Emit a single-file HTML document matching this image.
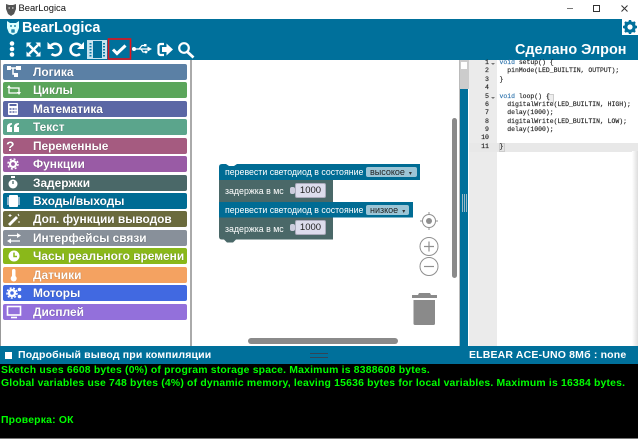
<!DOCTYPE html>
<html><head><meta charset="utf-8"><style>
html,body{margin:0;padding:0}
body{width:638px;height:439px;position:relative;overflow:hidden;background:#fff;font-family:"Liberation Sans",sans-serif}
.a{position:absolute}
.c{position:absolute;left:3px;width:184px;height:16px;border-radius:2px;color:#fff;font-weight:bold;font-size:11.9px;line-height:16px;text-shadow:0 0 1px rgba(0,0,0,.4)}
.c span{position:absolute;left:30px;top:0;white-space:nowrap}
.c svg{position:absolute;left:3px;top:1px}
.b{position:absolute;font-size:8.8px;color:#fff;white-space:nowrap;line-height:12px}
.f{position:absolute;background:#9cc5d6;border-radius:2px;color:#222;font-size:9px;line-height:10px;height:10px;padding-left:4px;box-sizing:border-box;white-space:nowrap}
.n{position:absolute;background:#dcdcec;border:1px solid #aab;height:15px;width:31px;box-sizing:border-box;color:#222;font-size:9.5px;line-height:13px;text-align:center;border-radius:2px}
pre{margin:0;position:absolute;font-family:"Liberation Mono",monospace;font-size:6.45px;line-height:8.37px;color:#222;-webkit-text-stroke:.15px #222}
.o{position:absolute;left:1px;font-size:10.4px;font-weight:bold;color:#0f0;white-space:nowrap;letter-spacing:.195px}
</style></head><body>
<div class="a" style="left:0;top:0;width:638px;height:19px;background:#fff"></div>
<svg class="a" style="left:5px;top:3px" width="12" height="13" viewBox="0 0 12 13"><path d="M1 1l3 1h4l3-1v5l-2 5-3 2-3-2-2-5z" fill="#555"/><path d="M3.500 5h1.500M7 5h1.500" stroke="#fff"/></svg>
<div class="a" style="left:18.500px;top:2px;font-size:9.400px;line-height:12px;color:#111">BearLogica</div>
<div class="a" style="left:567px;top:8px;width:6px;height:1px;background:#777"></div>
<div class="a" style="left:593px;top:5px;width:5px;height:5px;border:1px solid #333"></div>
<svg class="a" style="left:621px;top:5px" width="7" height="7"><path d="M.5 .5l6 6M6.500 .5l-6 6" stroke="#333" stroke-width="1"/></svg>

<div class="a" style="left:0;top:19px;width:638px;height:41px;background:#00709b"></div>
<svg class="a" style="left:6px;top:20px" width="14" height="16" viewBox="0 0 14 16"><path d="M1 1l3 2h6l3-2 0 7-2 5-4 2-4-2-2-5z" fill="#dff"/><path d="M4 6h2M8 6h2M6 10h2v2h-2z" fill="none" stroke="#00709b" stroke-width="1.300"/></svg>
<div class="a" style="left:22px;top:19px;font-size:14.400px;line-height:18px;font-weight:bold;color:#fff">BearLogica</div>
<div class="a" style="left:515px;top:41px;font-size:14.400px;line-height:18px;font-weight:bold;color:#fff">Сделано Элрон</div>

<svg class="a" style="left:0;top:38px" width="200" height="22" viewBox="0 0 200 22" fill="none">
<g fill="#fff"><circle cx="12" cy="5.500" r="2.300"/><circle cx="12" cy="11" r="2.300"/><circle cx="12" cy="16.500" r="2.300"/></g>
<path d="M29 7l9 9M38 7l-9 9" stroke="#fff" stroke-width="2.300"/>
<path d="M26.500 4.500h5l-5 5zM40.500 4.500h-5l5 5zM26.500 18.500h5l-5-5zM40.500 18.500h-5l5-5z" fill="#fff"/>
<path d="M51 7.500a5.800 5.800 0 1 1 .5 8.500" stroke="#fff" stroke-width="2.500"/>
<path d="M47.500 4v7h7z" fill="#fff"/>
<path d="M80.500 7.500a5.800 5.800 0 1 0-.5 8.500" stroke="#fff" stroke-width="2.500"/>
<path d="M84 4v7h-7z" fill="#fff"/>
<rect x="87" y="2" width="20" height="19" fill="#c7e3ee"/>
<rect x="93" y="3" width="9" height="17" fill="#00709b"/>
<path d="M90.500 5v14M104 5v14" stroke="#0a7aa5" stroke-width="2" stroke-dasharray="1.500 1.500"/>
<rect x="108.500" y="1" width="22" height="20" stroke="#e2121b" stroke-width="1.600"/>
<path d="M113 11.500l4 4 8.500-8" stroke="#fff" stroke-width="3"/>
<path d="M134 11h16" stroke="#fff" stroke-width="1.300"/>
<circle cx="134" cy="11" r="2" fill="#fff"/><path d="M147.500 8.500l4.500 2.500-4.500 2.500z" fill="#fff"/>
<path d="M139 11l3-3.500h2.500M141 11l2 3h2" stroke="#fff" stroke-width="1.200"/><rect x="144" y="6" width="2.500" height="2.500" fill="#fff"/><circle cx="146" cy="14" r="1.400" fill="#fff"/>
<path d="M164 6h-3.500a2 2 0 0 0-2 2v7a2 2 0 0 0 2 2h3.500" stroke="#fff" stroke-width="2.200"/>
<path d="M162 9h4.500V5.500l6.500 6-6.500 6v-3.500h-4.500z" fill="#fff"/>
<circle cx="184" cy="10" r="4.800" stroke="#fff" stroke-width="2.200"/><path d="M187.500 14l6 5.500" stroke="#fff" stroke-width="2.800"/>
</svg>

<div class="a" style="left:622px;top:18px;width:16px;height:17px;background:#fff"></div>
<svg class="a" style="left:622px;top:19px" width="16" height="16" viewBox="0 0 16 16"><circle cx="8" cy="8" r="4.200" fill="none" stroke="#00709b" stroke-width="3.200"/><path d="M8 1v3M8 12v3M1 8h3M12 8h3M3 3l2 2M11 11l2 2M13 3l-2 2M5 11l-2 2" stroke="#00709b" stroke-width="2.400"/></svg>

<div class="a" style="left:0;top:60px;width:1px;height:286px;background:#999"></div>
<div class="a" style="left:190px;top:60px;width:2px;height:286px;background:#aaa"></div>

<div class="c" style="top:64px;background:#5b80a5"><svg width="16" height="14"><path d="M3 3h9M7 3v6h3" stroke="#fff" stroke-width="1.500" fill="none"/><rect x="1" y="1" width="4" height="4" fill="#fff"/><rect x="10" y="1" width="5" height="4" fill="#fff"/><rect x="8" y="8" width="4" height="4" fill="#fff"/></svg><span>Логика</span></div>
<div class="c" style="top:82px;background:#5ba55b"><svg width="16" height="14"><path d="M3 4v6h9M13 10V5H4" stroke="#fff" stroke-width="1.300" fill="none"/><path d="M1 5l2-3 2 3zM11 9l2 3 2-3z" fill="#fff"/></svg><span>Циклы</span></div>
<div class="c" style="top:101px;background:#5b67a5"><svg width="16" height="14"><rect x="2" y="1" width="10" height="12" rx="1" fill="#fff"/><path d="M3.500 3h7" stroke="#5b67a5" stroke-width="2"/><path d="M3.500 7h7M3.500 10h7" stroke="#5b67a5" stroke-width="1.500" stroke-dasharray="2 1"/></svg><span>Математика</span></div>
<div class="c" style="top:119px;background:#5ba58c"><span>Текст</span><svg width="16" height="14"><path d="M6 3v1.500Q4 5 4 7h2v5H1V7q0-4 5-4zM13 3v1.500Q11 5 11 7h2v5H8V7q0-4 5-4z" fill="#fff"/></svg></div>
<div class="c" style="top:138px;background:#a55b80"><span>Переменные</span><div class="a" style="left:3px;top:0;font-size:14px">?</div></div>
<div class="c" style="top:156px;background:#995ba5"><span>Функции</span><svg width="16" height="14"><circle cx="7" cy="7" r="3" fill="none" stroke="#fff" stroke-width="2.200"/><circle cx="7" cy="7" r="5" fill="none" stroke="#fff" stroke-width="1.500" stroke-dasharray="2 2"/></svg></div>
<div class="c" style="top:175px;background:#4a6868"><span>Задержки</span><svg width="16" height="14"><circle cx="7" cy="8" r="4.500" fill="#fff"/><rect x="5" y="0" width="4" height="2" fill="#fff"/><path d="M7 5v3" stroke="#4a6868" stroke-width="1.300"/></svg></div>
<div class="c" style="top:193px;background:#006c94"><span>Входы/выходы</span><svg width="16" height="14"><rect x="3" y="1" width="9" height="12" rx="1" fill="#fff"/><path d="M2 3v8M13 3v8" stroke="#bcd" stroke-width="1.500"/></svg></div>
<div class="c" style="top:211px;background:#6b6b3d"><span>Доп. функции выводов</span><svg width="16" height="14"><path d="M2 12l8-8 2 2-8 8z" fill="#fff"/><path d="M4 2v3M2.500 3.500h3M12 2l1 2M13 9v2" stroke="#fff"/></svg></div>
<div class="c" style="top:230px;background:#88909a"><span>Интерфейсы связи</span><svg width="16" height="14"><path d="M2 4.500h10M4 10h10" stroke="#fff" stroke-width="1.300"/><path d="M11 2l4 2.500-4 2.500zM5 7.500l-4 2.500 4 2.500z" fill="#fff"/></svg></div>
<div class="c" style="top:248px;background:#8ab81a"><span>Часы реального времени</span><svg width="16" height="14"><circle cx="8" cy="7" r="5.500" fill="#fff"/><path d="M8 3.500v4h3" stroke="#8ab81a" stroke-width="1.500" fill="none"/></svg></div>
<div class="c" style="top:267px;background:#f4a261"><span>Датчики</span><svg width="16" height="14"><rect x="6" y="1" width="3.500" height="9" rx="1.700" fill="#fff"/><circle cx="7.700" cy="10.500" r="3" fill="#fff"/></svg></div>
<div class="c" style="top:285px;background:#4169e1"><span>Моторы</span><svg width="18" height="14"><circle cx="6" cy="7" r="3" fill="none" stroke="#fff" stroke-width="2.500"/><circle cx="6" cy="7" r="5" fill="none" stroke="#fff" stroke-width="1.500" stroke-dasharray="2 1.500"/><circle cx="13.500" cy="3.500" r="1.800" fill="#fff"/><circle cx="13.500" cy="10.500" r="1.800" fill="#fff"/></svg></div>
<div class="c" style="top:304px;background:#9370db"><span>Дисплей</span><svg width="16" height="14"><rect x="1.500" y="1.500" width="13" height="8.500" fill="none" stroke="#fff" stroke-width="1.600"/><path d="M5 12.500h6" stroke="#fff" stroke-width="1.600"/></svg></div>

<!-- blocks -->
<svg class="a" style="left:0;top:0" width="638" height="439">
<path d="M219 180v-13q0-3 3-3h4l3 2h5l3-2h183v16z" fill="#006c94"/>
<path d="M219 180h114v22H219z" fill="#4a6868"/>
<path d="M219 202h194v15.500H219z" fill="#006c94"/>
<path d="M219 217.500h114v22h-97l-3 3h-6l-3-3h-2q-3 0-3-3z" fill="#4a6868"/>
</svg>
<div class="b" style="left:225px;top:166px">перевести светодиод в состояние</div>
<div class="f" style="left:366px;top:167px;width:51px">высокое<span style="font-size:6px;margin-left:4px;color:#333">▾</span></div>
<div class="b" style="left:225px;top:185px">задержка в мс</div>
<div class="a" style="left:290px;top:187px;width:5px;height:7px;background:#ccd;border-radius:2px"></div>
<div class="n" style="left:295px;top:183px">1000</div>
<div class="b" style="left:225px;top:204px">перевести светодиод в состояние</div>
<div class="f" style="left:366px;top:205px;width:43px">низкое<span style="font-size:6px;margin-left:4px;color:#333">▾</span></div>
<div class="b" style="left:225px;top:223px">задержка в мс</div>
<div class="a" style="left:290px;top:224px;width:5px;height:7px;background:#ccd;border-radius:2px"></div>
<div class="n" style="left:295px;top:220px">1000</div>

<!-- controls -->
<svg class="a" style="left:0;top:0" width="638" height="439" fill="none" stroke="#8f8f8f">
<circle cx="429" cy="221" r="6.500" stroke-width="1"/><circle cx="429" cy="221" r="3" fill="#8f8f8f" stroke="none"/><path d="M429 212v3M429 227v3M420 221h3M435 221h3" stroke-width="1"/>
<circle cx="429" cy="246.500" r="9" stroke-width="1"/><path d="M424 246.500h10M429 241.500v10" stroke-width="1.200"/>
<circle cx="429" cy="266.500" r="9" stroke-width="1"/><path d="M424 266.500h10" stroke-width="1.200"/>
<path d="M412 295h25v3h-25zM418 295l1-2h11l1 2z" fill="#8a8a8a" stroke="none"/>
<path d="M413.500 300h21.500v23.500q0 1.500-1.500 1.500h-18.500q-1.500 0-1.500-1.500z" fill="#8a8a8a" stroke="none"/>
</svg>
<div class="a" style="left:452px;top:118px;width:5px;height:160px;background:#8a8a8a;border-radius:3px"></div>
<div class="a" style="left:248px;top:338px;width:150px;height:6px;background:#8a8a8a;border-radius:3px"></div>

<!-- splitter / editor -->
<div class="a" style="left:459px;top:60px;width:1px;height:286px;background:#bbb"></div>
<div class="a" style="left:460px;top:60px;width:8px;height:286px;background:#00709b"></div>
<div class="a" style="left:460px;top:60px;width:9px;height:29px;background:#ccc"></div>
<div class="a" style="left:461px;top:62px;width:6px;height:7px;background:#fff"></div>
<div class="a" style="left:462px;top:194px;width:6px;height:18px;background:repeating-linear-gradient(90deg,#9bb8c6 0 1px,#00709b 1px 2px)"></div>
<div class="a" style="left:469px;top:60px;width:28px;height:286px;background:#ebebeb"></div>
<div class="a" style="left:469px;top:142.500px;width:169px;height:9px;background:#e8e8e8"></div>
<div class="a" style="left:632px;top:151px;width:6px;height:195px;background:linear-gradient(90deg,#fff,#ddd)"></div>
<pre style="left:469px;top:59px;width:20px;text-align:right;font-size:6.600px;color:#222">1
2
3
4
5
6
7
8
9
10
11</pre>
<div class="a" style="left:491px;top:63px;width:0;height:0;border:2px solid transparent;border-top:2.500px solid #777"></div>
<div class="a" style="left:491px;top:96.500px;width:0;height:0;border:2px solid transparent;border-top:2.500px solid #777"></div>
<div class="a" style="left:548px;top:93.500px;width:4px;height:7px;border:1px solid #ccc;background:#eee"></div>
<div class="a" style="left:499px;top:143px;width:4px;height:7px;border:1px solid #ccc;background:#e4e4e4"></div>
<pre style="left:499.500px;top:59px"><span style="color:#2f74ad;-webkit-text-stroke:.15px #2f74ad">void</span> setup() {
  pinMode(LED_BUILTIN, OUTPUT);
}

<span style="color:#2f74ad;-webkit-text-stroke:.15px #2f74ad">void</span> loop() {
  digitalWrite(LED_BUILTIN, HIGH);
  delay(1000);
  digitalWrite(LED_BUILTIN, LOW);
  delay(1000);

}</pre>

<!-- status -->
<div class="a" style="left:0;top:346px;width:638px;height:18px;background:#00709b"></div>
<div class="a" style="left:5px;top:352px;width:7px;height:7px;background:#fff"></div>
<div class="a" style="left:18px;top:348px;font-size:10.5px;line-height:14px;font-weight:bold;color:#fff;letter-spacing:.17px">Подробный вывод при компиляции</div>
<div class="a" style="left:310px;top:353px;width:18px;height:3px;border-top:1px solid #345;border-bottom:1px solid #345"></div>
<div class="a" style="left:469px;top:348px;font-size:10.5px;line-height:14px;font-weight:bold;color:#fff;letter-spacing:.17px">ELBEAR ACE-UNO 8Мб : none</div>

<div class="a" style="left:0;top:364px;width:638px;height:74px;background:#000"></div>
<div class="a" style="left:0;top:438px;width:638px;height:1px;background:#777"></div>
<div class="o" style="top:364px;line-height:13px">Sketch uses 6608 bytes (0%) of program storage space. Maximum is 8388608 bytes.</div>
<div class="o" style="top:377px;line-height:13px">Global variables use 748 bytes (4%) of dynamic memory, leaving 15636 bytes for local variables. Maximum is 16384 bytes.</div>
<div class="o" style="top:414px;line-height:13px">Проверка: ОК</div>
</body></html>
